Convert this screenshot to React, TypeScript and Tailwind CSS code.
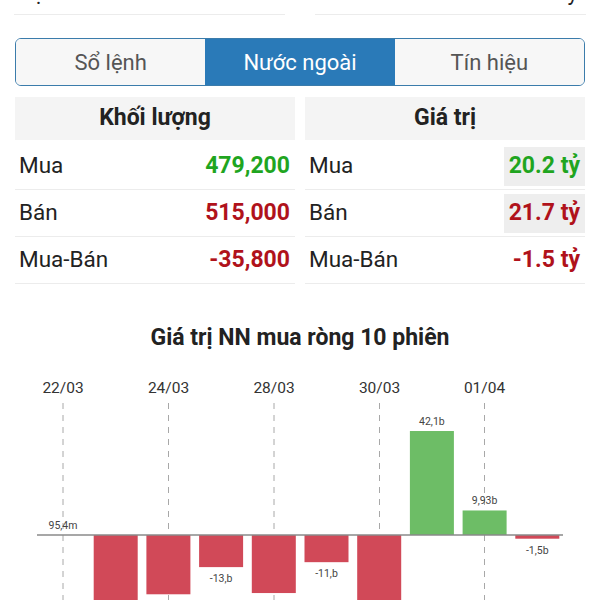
import React from 'react';

const font = { fontFamily: 'Roboto, "Noto Sans", sans-serif' };

type Row = { label: string; value: string; color: string; boxed?: boolean };

const volumeRows: Row[] = [
  { label: 'Mua', value: '479,200', color: 'text-[#1fa51f]' },
  { label: 'Bán', value: '515,000', color: 'text-[#b0121b]' },
  { label: 'Mua-Bán', value: '-35,800', color: 'text-[#b0121b]' },
];

const valueRows: Row[] = [
  { label: 'Mua', value: '20.2 tỷ', color: 'text-[#1fa51f]', boxed: true },
  { label: 'Bán', value: '21.7 tỷ', color: 'text-[#b0121b]', boxed: true },
  { label: 'Mua-Bán', value: '-1.5 tỷ', color: 'text-[#b0121b]' },
];

function StatTable({ title, rows }: { title: string; rows: Row[] }) {
  return (
    <div className="flex flex-col">
      <div className="h-[43px] mb-[3px] bg-[#f4f4f4] flex items-center justify-center text-[23px] font-bold text-[#222]">
        {title}
      </div>
      {rows.map((r) => (
        <div key={r.label} className="h-[47px] flex items-center justify-between border-b border-[#ececec] pl-[4px]">
          <span className="text-[22.5px] text-[#222]">{r.label}</span>
          <span
            className={`h-[39px] flex items-center px-[5px] text-[23px] font-bold ${r.color} ${r.boxed ? 'bg-[#eeeeee]' : ''}`}
          >
            {r.value}
          </span>
        </div>
      ))}
    </div>
  );
}

// chart data: value in billions
const bars = [
  { v: 0.0954, label: '95,4m' },
  { v: -30, label: '-30,b' },
  { v: -24, label: '-24,b' },
  { v: -13, label: '-13,b' },
  { v: -23.5, label: '-23,b' },
  { v: -11, label: '-11,b' },
  { v: -31, label: '-31,b' },
  { v: 42.1, label: '42,1b' },
  { v: 9.93, label: '9,93b' },
  { v: -1.5, label: '-1,5b' },
];

const dates = [
  { x: 63, t: '22/03' },
  { x: 168.5, t: '24/03' },
  { x: 274, t: '28/03' },
  { x: 379.5, t: '30/03' },
  { x: 484.5, t: '01/04' },
];

function NetChart() {
  const base = 174;
  const scale = 2.47;
  const step = 52.7;
  return (
    <svg width="600" height="240" viewBox="0 0 600 240" className="block">
      {dates.map((d) => (
        <g key={d.t}>
          <text x={d.x} y={32} textAnchor="middle" fontSize="15.5" fill="#333" style={font}>
            {d.t}
          </text>
          <line x1={d.x} y1={42} x2={d.x} y2={240} stroke="#a8a8a8" strokeWidth="1" strokeDasharray="6 6" />
        </g>
      ))}
      {bars.map((b, i) => {
        const cx = 63 + i * step;
        const h = Math.abs(b.v) * scale;
        const pos = b.v >= 0;
        const y = pos ? base - h : base;
        return (
          <g key={i}>
            {i > 0 && (
              <rect x={cx - 22} y={y} width={44} height={h} fill={pos ? '#6dbd66' : '#d14958'} />
            )}
            <text
              x={cx}
              y={pos ? base - h - 6 : base + h + 15}
              textAnchor="middle"
              fontSize="10.5"
              fill="#444"
              style={font}
            >
              {b.label}
            </text>
          </g>
        );
      })}
      <line x1={37} y1={base} x2={563} y2={base} stroke="#8a8a8a" strokeWidth="1.5" />
    </svg>
  );
}

export default function App() {
  return (
    <div className="w-[600px] h-[600px] overflow-hidden bg-white" style={font}>
      {/* cut-off row above */}
      <div className="h-[15px] grid grid-cols-2 gap-[30px] px-[14px]">
        <div className="border-b border-[#ececec] overflow-hidden flex items-start justify-between">
          <span className="text-[22px] leading-none -translate-y-[18px] text-[#222] pl-[4px]">Dự mua</span>
        </div>
        <div className="border-b border-[#ececec] overflow-hidden flex items-start justify-end">
          <span className="text-[22px] leading-none -translate-y-[18px] text-[#222] pr-[8px]">0 tỷ</span>
        </div>
      </div>

      {/* tabs */}
      <div className="mt-[23px] mx-[15px] h-[48px] flex rounded-[6px] border border-[#3b7cab] overflow-hidden">
        <div className="flex-1 flex items-center justify-center bg-[#f7f7f7] text-[22px] text-[#555]">Sổ lệnh</div>
        <div className="flex-1 flex items-center justify-center bg-[#2a7ab8] text-[22px] text-white">Nước ngoài</div>
        <div className="flex-1 flex items-center justify-center bg-[#f7f7f7] text-[22px] text-[#555]">Tín hiệu</div>
      </div>

      {/* stats */}
      <div className="mt-[11px] mx-[15px] grid grid-cols-2 gap-[10px]">
        <StatTable title="Khối lượng" rows={volumeRows} />
        <StatTable title="Giá trị" rows={valueRows} />
      </div>

      <div className="mt-[40px] text-center text-[23px] font-bold text-[#222] leading-[28px]">
        Giá trị NN mua ròng 10 phiên
      </div>

      <div className="mt-[9px]">
        <NetChart />
      </div>
    </div>
  );
}
